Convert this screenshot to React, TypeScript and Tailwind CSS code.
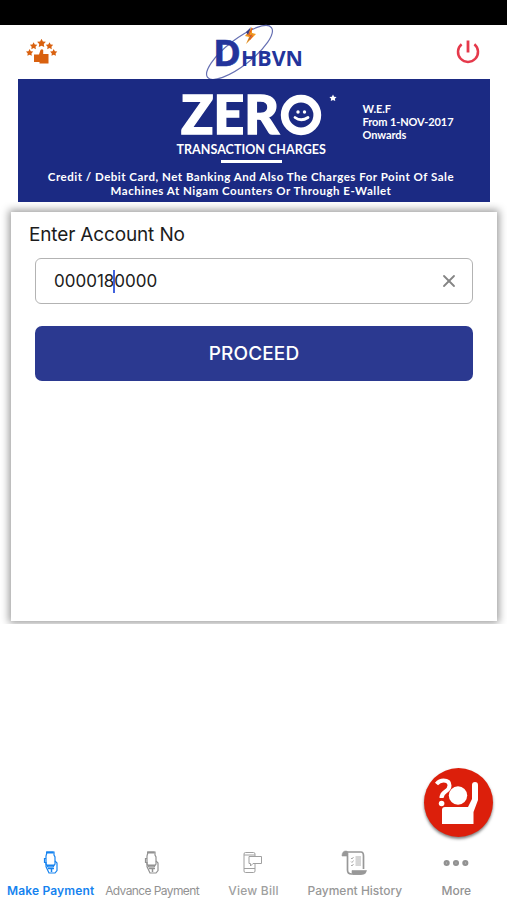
import { useState } from "react";
import { Ellipsis, X } from "lucide-react";
import { clsx } from "clsx";

function StarBurst({ x, y, r }: { x: number; y: number; r: number }) {
  return (
    <path
      transform={`translate(${x} ${y}) scale(${r})`}
      d="M0-1 .32-.38 1-.31 .52.2 .62.85 0 .56-.62.85-.52.2-1-.31-.32-.38Z"
    />
  );
}

function RatingIcon() {
  return (
    <svg width="32" height="26" viewBox="0 0 32 26" fill="#d9610f">
      <StarBurst x={3.6} y={13.7} r={3.6} />
      <StarBurst x={7.6} y={7} r={3.7} />
      <StarBurst x={15.5} y={4.2} r={4.4} />
      <StarBurst x={23.5} y={7} r={3.7} />
      <StarBurst x={27.7} y={13.7} r={3.6} />
      <path d="M8 15.500h5l1.500-4.500q1.500-1.500 2.700 0v4H22.500v9.500H13.500v-1.500H8Z" />
    </svg>
  );
}

function Logo() {
  return (
    <svg width="102" height="54" viewBox="0 0 102 54" className="overflow-visible">
      <ellipse
        cx="35.5"
        cy="27.5"
        rx="40.5"
        ry="13"
        transform="rotate(-38 35.5 27.5)"
        fill="none"
        stroke="#6670b3"
        strokeWidth="1.2"
      />
      <path d="M48 2 41 11l4 1-3 7 10-10-4-1Z" fill="#f39a1f" />
      <path d="M47 2l-5 5 2 3ZM49 8l-3 4-3 6Z" fill="#3b3f86" />
      <path d="M48.500 3l-4 7 4 1-3 4" fill="none" stroke="#e45423" strokeWidth="1" />
      <g fill="#23349b" fontFamily="'Open Sans', sans-serif" fontWeight="700">
        <text
          x="9"
          y="41"
          fontSize="35.5"
          textLength="28"
          lengthAdjust="spacingAndGlyphs"
          stroke="#23349b"
          strokeWidth="0.5"
        >
          D
        </text>
        <text x="37" y="41" fontSize="21.5" textLength="62" lengthAdjust="spacingAndGlyphs">
          HBVN
        </text>
      </g>
    </svg>
  );
}

function PowerIcon() {
  return (
    <svg width="26" height="26" viewBox="0 0 26 26" fill="none" stroke="#e5394b">
      <path d="M6.600 5.200a10 10 0 1 0 12.800 0" strokeWidth="2.500" />
      <path d="M13 1.500v12" strokeWidth="2.800" />
    </svg>
  );
}

function Smiley() {
  return (
    <svg width="42" height="42" viewBox="0 0 42 42" fill="none" stroke="#fff">
      <circle cx="21" cy="21" r="16.300" strokeWidth="7.800" />
      <circle cx="18" cy="18" r="1.700" fill="#fff" stroke="none" />
      <circle cx="24.500" cy="18" r="1.700" fill="#fff" stroke="none" />
      <path d="M15 23.500q6 4.500 13 0" strokeWidth="2.800" strokeLinecap="round" />
    </svg>
  );
}

function Banner() {
  return (
    <section className="mx-auto h-[123px] w-[472px] bg-[#1b2a83] pl-[159px] font-['Lato',sans-serif] text-white">
      <div className="flex h-[86px]">
        <div className="w-[150px] shrink-0 pt-[15px]">
          <div className="flex h-[42px] items-center pl-[3px]">
            <svg width="100" height="42" viewBox="0 0 100 42" className="shrink-0 overflow-visible">
              <text
                x="1"
                y="40"
                fill="#fff"
                stroke="#fff"
                strokeWidth="1.4"
                fontFamily="Lato, sans-serif"
                fontSize="54"
                fontWeight="900"
                textLength="98"
                lengthAdjust="spacingAndGlyphs"
              >
                ZER
              </text>
            </svg>
            <Smiley />
          </div>
          <p className="mt-[6px] text-[12.5px] leading-4 font-bold tracking-[0.03px] whitespace-nowrap">
            TRANSACTION CHARGES
          </p>
          <div className="mt-[2px] ml-[44px] h-[3px] w-[61px] bg-white" />
        </div>
        <svg width="8" height="8" viewBox="0 0 8 8" fill="#fff" className="mt-[15px] ml-[2px] shrink-0">
          <StarBurst x={4} y={4} r={3.6} />
        </svg>
        <p className="mt-[23px] ml-[26px] text-[11px] leading-[13px] font-bold tracking-[-0.1px] whitespace-nowrap">
          W.E.F
          <br />
          From 1-NOV-2017
          <br />
          Onwards
        </p>
      </div>
      <p className="mt-[5px] ml-[-164px] text-center text-[11.5px] leading-[14px] font-bold tracking-[0.51px] whitespace-nowrap">
        Credit / Debit Card, Net Banking And Also The Charges For Point Of Sale
        <br />
        Machines At Nigam Counters Or Through E-Wallet
      </p>
    </section>
  );
}

function AccountForm() {
  const [account, setAccount] = useState("0000180000");

  return (
    <div className="h-[422px] overflow-hidden px-[11px] pt-[10px]">
      <form
        onSubmit={(e) => e.preventDefault()}
        className="mr-[-1px] h-[409px] bg-white px-6 pt-[10px] shadow-[0_0_8px_2px_rgba(0,0,0,0.4)]"
      >
        <label className="ml-[-6px] block pt-px text-[19px] leading-6 tracking-[-0.15px] text-[#1c1c1c]">
          Enter Account No
        </label>
        <div className="mt-[11px] flex h-[46px] items-center rounded-[6px] border-[1.5px] border-[#b3b3b3] pr-[13px] pl-[18px]">
          <div className="flex flex-1 items-center pt-px text-[17px] text-[#202020]">
            <span>{account.slice(0, 6)}</span>
            <span className="-mx-px h-[23px] w-[2px] bg-[#4263dd]" />
            <span>{account.slice(6)}</span>
          </div>
          <button type="button" onClick={() => setAccount("")}>
            <X className="h-5 w-5 text-[#858585]" strokeWidth={2.2} />
          </button>
        </div>
        <button
          type="submit"
          className="mt-[22px] h-[55px] w-full rounded-[7px] bg-[#2b3990] pt-px text-[19px] font-medium tracking-[0.15px] text-white"
        >
          PROCEED
        </button>
      </form>
    </div>
  );
}

function HelpButton() {
  return (
    <button className="absolute top-[768px] left-[424px] h-[69px] w-[69px] rounded-full bg-[#dc1f0b] shadow-[0_2px_3px_rgba(0,0,0,0.5)]">
      <svg width="69" height="69" viewBox="0 0 69 69" fill="#fff">
        <path
          d="M12.500 16q3-3.500 7-3.500 6 0 6 5 0 3.500-4 6-4 2.500-4 6.500"
          fill="none"
          stroke="#fff"
          strokeWidth="4"
        />
        <circle cx="17.600" cy="35.500" r="2.800" />
        <circle cx="34" cy="27.500" r="9.200" />
        <path d="M21 39h23l4-8V17q0-3 3-3t3 3V32L49.500 44V56H18V42q0-3 3-3Z" />
      </svg>
    </button>
  );
}

function PayIcon() {
  return (
    <svg width="16" height="24" viewBox="0 0 16 24" fill="none" stroke="currentColor" strokeWidth="1.200">
      <path d="M4 1h7v3l1 2v7l-2 3H5l-2-3V5Z" />
      <path d="M3 1.500h7.500M4 14.500h7" strokeWidth="2" />
      <path d="M3 7.500H1.500v4H3v4l3 6.500h6l2-2.500V12l-2-2" />
      <path d="M5 17.500h6M8.500 17v4" strokeWidth="1.500" />
    </svg>
  );
}

function BillIcon() {
  return (
    <svg width="20" height="24" viewBox="0 0 20 24" fill="none" stroke="currentColor" strokeWidth="1">
      <path d="M12 5V3q0-1.500-1.500-1.500h-8Q1 1.500 1 3v17q0 1.500 1.500 1.500h8Q12 21.500 12 20v-7M1 4h11M1 17.500h11" />
      <path d="M6 5.500h12.500v7H10L7.500 15v-2.500H6Z" />
    </svg>
  );
}

function HistoryIcon() {
  return (
    <svg width="27" height="26" viewBox="0 0 27 26" fill="none" stroke="currentColor">
      <path d="M4 2h16q2.500 0 2.500 4v13M6.500 6v14q0 4 4 4h10" strokeWidth="1.700" />
      <path d="M1 6q0-5 4-5 2.500 0 2 5ZM11 20.500h14.500q-.5 4-4.500 4h-9q-1.500-1-1-4Z" fill="currentColor" strokeWidth="0.600" />
      <path d="M10 8l1 1 1.500-2M10 11.500l1 1 1.500-2M10 15l1 1 1.500-2M14.500 7H20M14.500 9H20M14.500 11H20M14.500 13H20M14.500 15H20" strokeWidth="0.800" />
    </svg>
  );
}

const tabs = [
  { label: "Make Payment", icon: <PayIcon />, style: "font-semibold tracking-[0.15px] text-[#1683ef]" },
  { label: "Advance Payment", icon: <PayIcon />, style: "tracking-[-0.6px] text-[#929292]" },
  { label: "View Bill", icon: <BillIcon />, style: "font-medium tracking-[0.2px] text-[#a0a0a0]" },
  { label: "Payment History", icon: <HistoryIcon />, style: "font-medium text-[#989898]" },
  { label: "More", icon: <Ellipsis className="h-8 w-8" strokeWidth={2.6} />, style: "font-medium text-[#929292]" },
];

export default function App() {
  return (
    <div className="relative flex h-[900px] w-[507px] flex-col overflow-hidden bg-white font-['Inter',sans-serif]">
      <div className="h-[25px] shrink-0 bg-black" />
      <header className="flex h-[54px] shrink-0 items-center justify-between px-[26px]">
        <RatingIcon />
        <div className="mr-1">
          <Logo />
        </div>
        <PowerIcon />
      </header>
      <Banner />
      <AccountForm />
      <nav className="mt-auto grid h-[54px] grid-cols-5">
        {tabs.map((tab) => (
          <button
            key={tab.label}
            className={clsx("flex flex-col items-center text-[12px] whitespace-nowrap", tab.style)}
          >
            <span className="flex h-[34px] items-center">{tab.icon}</span>
            <span className="mt-[3px] leading-4">{tab.label}</span>
          </button>
        ))}
      </nav>
      <HelpButton />
    </div>
  );
}
